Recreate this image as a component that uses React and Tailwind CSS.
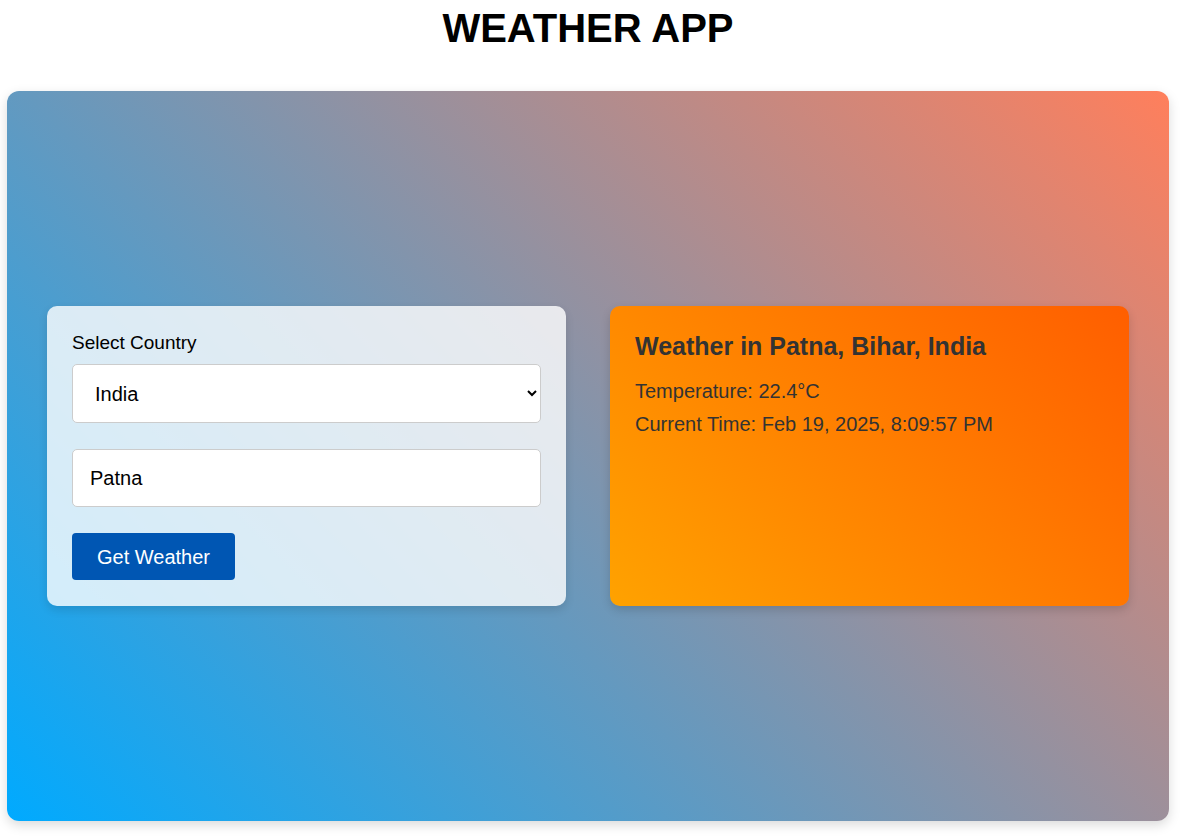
import React, { useState } from "react";

export default function App() {
  const [country, setCountry] = useState("India");
  const [city, setCity] = useState("Patna");

  return (
    <div className="min-h-screen bg-white font-['Liberation_Sans',Arial,sans-serif] pl-[7px] pr-[14px] pb-[16px]">
      <h1 className="text-center font-bold text-[40px] leading-[46px] text-black pt-[5px] pb-[40px]">
        WEATHER APP
      </h1>

      <div className="h-[730px] rounded-[12px] bg-[linear-gradient(45deg,#00aaff,#ff7f5c)] shadow-[0_4px_12px_rgba(0,0,0,0.15)] px-[40px] flex items-center justify-between">
        {/* Form */}
        <div className="w-[519px] h-[300px] rounded-[10px] bg-white/80 shadow-[0_4px_10px_rgba(0,0,0,0.12)] p-[25px]">
          <label className="block text-[19px] leading-[21px] text-black mb-[11px] mt-[1px]">Select Country</label>
          <select
            value={country}
            onChange={(e) => setCountry(e.target.value)}
            className="block w-full h-[59px] rounded-[5px] border border-[#ccc] bg-white pl-[18px] pr-[10px] text-[20px] text-black outline-none"
          >
            <option>India</option>
            <option>United States</option>
            <option>United Kingdom</option>
          </select>
          <input
            value={city}
            onChange={(e) => setCity(e.target.value)}
            className="block w-full h-[58px] mt-[26px] rounded-[5px] border border-[#ccc] bg-white px-[17px] text-[20px] text-black outline-none"
          />
          <button className="mt-[26px] h-[47px] px-[25px] rounded-[4px] bg-[#0056b3] text-white text-[20px]">
            Get Weather
          </button>
        </div>

        {/* Result */}
        <div className="w-[519px] h-[300px] rounded-[10px] bg-[linear-gradient(45deg,#ffa200,#ff5e00)] shadow-[0_4px_10px_rgba(0,0,0,0.15)] p-[25px] text-[#333]">
          <h2 className="font-bold text-[25px] leading-[28px] mt-[1px]">Weather in Patna, Bihar, India</h2>
          <p className="text-[20px] leading-[23px] mt-[20px]">Temperature: 22.4°C</p>
          <p className="text-[20px] leading-[23px] mt-[10px]">Current Time: Feb 19, 2025, 8:09:57 PM</p>
        </div>
      </div>
    </div>
  );
}
